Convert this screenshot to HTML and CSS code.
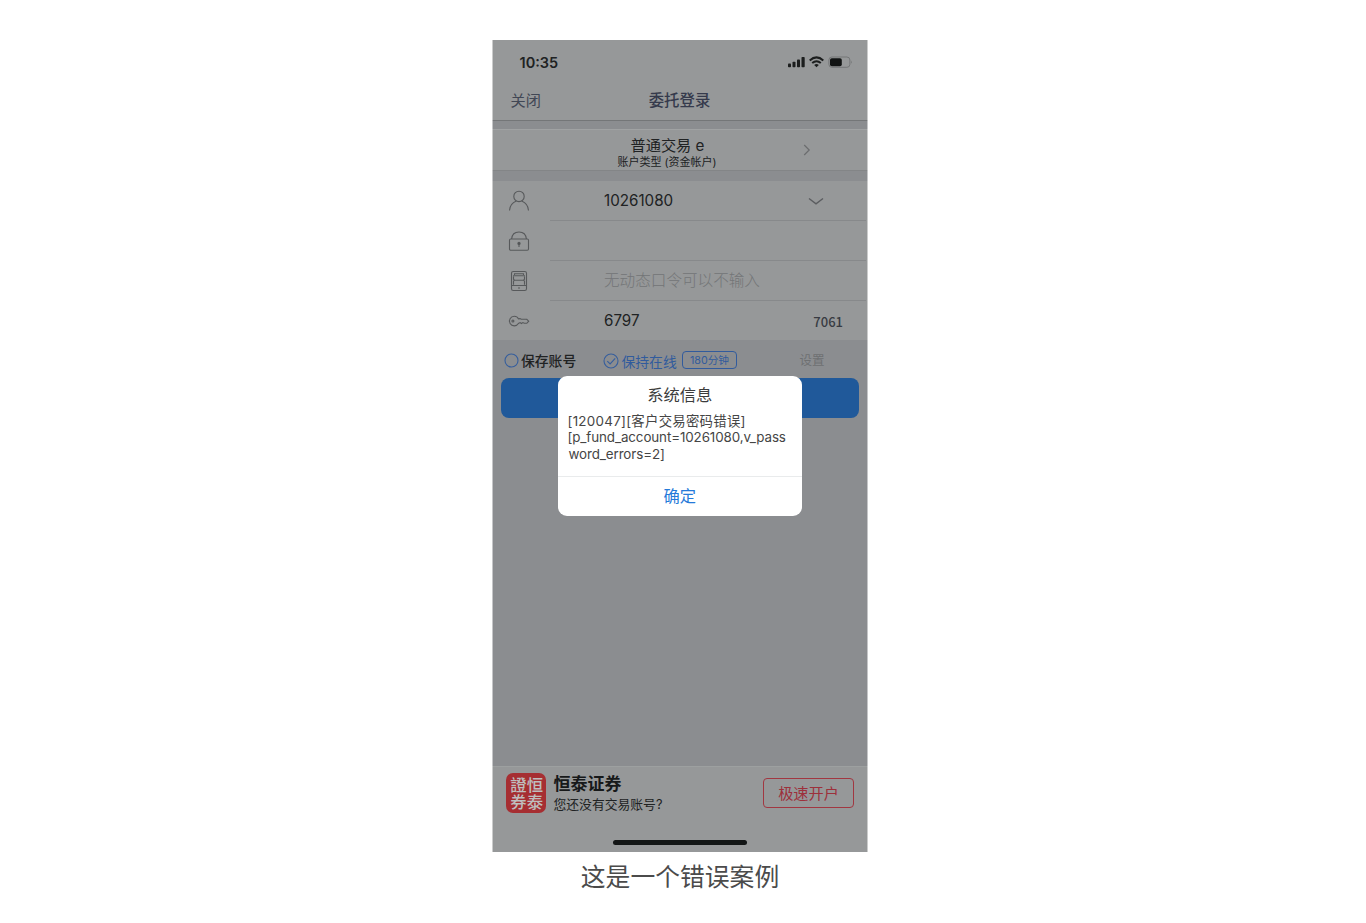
FILE: index.html
```html
<!DOCTYPE html>
<html lang="zh-CN">
<head>
<meta charset="utf-8">
<title>委托登录</title>
<link rel="stylesheet" href="styles.css">
</head>
<body>
<main class="page">
  <section class="phone">
    <header class="status">
      <span class="time">10:35</span>
      <svg class="status-icons" width="66" height="14" viewBox="0 0 66 14">
        <g fill="#1c1e1e">
          <rect x="1" y="8.6" width="3" height="3.6" rx=".8"/><rect x="5.5" y="6.8" width="3" height="5.4" rx=".8"/><rect x="10" y="4.6" width="3" height="7.6" rx=".8"/><rect x="14.5" y="2" width="3.2" height="10.2" rx=".8"/>
        </g>
        <g fill="none" stroke="#1c1e1e" stroke-width="2">
          <path d="M22.7 5.4Q29.5-.6 36.3 5.4"/><path d="M25.2 8.1Q29.5 4.4 33.8 8.1"/>
        </g>
        <path d="M27.2 9.9Q29.5 8.2 31.8 9.9L29.5 12.2Z" fill="#1c1e1e"/>
        <rect x="41.9" y="2" width="21" height="10.3" rx="3" fill="none" stroke="#747677"/>
        <rect x="43" y="3.2" width="11.8" height="8" rx="1.8" fill="#111313"/>
        <path d="M64 5.4Q65.8 7.1 64 8.8Z" fill="#747677"/>
      </svg>
    </header>
    <nav class="nav"><span class="close">关闭</span><h1 class="nav-title">委托登录</h1></nav>
    <div class="account">
      <div class="account-text"><div class="account-name">普通交易 e</div><div class="account-type">账户类型 (资金帐户)</div></div>
      <svg class="chevron" width="8" height="12" viewBox="0 0 8 12"><path d="M1.2 1L6.2 6L1.2 11"/></svg>
    </div>
    <form class="form">
      <div class="row">
        <svg class="icon" width="22" height="22" viewBox="0 0 22 22"><circle cx="11" cy="6.4" r="5.2"/><path d="M1.5 20.5C1.8 15.8 4.4 12.7 8.3 11.1M13.7 11.1C17.6 12.7 20.2 15.8 20.5 20.5"/></svg>
        <div class="field"><span class="value">10261080</span><svg class="down" width="16" height="9" viewBox="0 0 16 9"><path d="M1 1.5L8 6.8L15 1.5"/></svg></div>
      </div>
      <div class="row">
        <svg class="icon" width="22" height="22" viewBox="0 0 22 22"><rect x="1.5" y="9" width="19" height="11.3" rx="1.2"/><path d="M3.6 9C4 4.7 7 2 11 2S18 4.7 18.4 9M11 14V17"/><circle cx="11" cy="13.4" r="1.1" fill="#505254"/></svg>
        <div class="field"></div>
      </div>
      <div class="row">
        <svg class="icon" width="22" height="22" viewBox="0 0 22 22"><rect x="3.5" y="1.5" width="15" height="19" rx="1.8"/><path d="M6.5 5V3.7H15.5V5M5 5.8H17M5.5 6.5V9.2L6.5 10.2L5.5 11.2V14.8M16.5 6.5V9.2L15.5 10.2L16.5 11.2V14.8M6.5 10.2H15.5M4 15.5H18M10 18H12"/></svg>
        <div class="field"><span class="placeholder">无动态口令可以不输入</span></div>
      </div>
      <div class="row">
        <svg class="icon" width="22" height="22" viewBox="0 0 22 22"><path d="M10.6 8.9C9.7 7.2 8.3 6.3 6.2 6.3A4.8 4.8 0 1 0 10.4 13.5L12.1 12.6L13.4 13.5L14.9 12.6L16.2 13.3H18.8L20.7 11.2L18.8 9.3H13.2L12 8.6Z"/><circle cx="4.9" cy="11" r="1"/></svg>
        <div class="field last"><span class="value">6797</span><span class="captcha">7061</span></div>
      </div>
    </form>
    <div class="options">
      <svg class="radio" width="15" height="15" viewBox="0 0 15 15"><circle cx="7.5" cy="7.5" r="6.5"/></svg>
      <span class="save">保存账号</span>
      <svg class="radio checked" width="16" height="16" viewBox="0 0 16 16"><circle cx="8" cy="8" r="7"/><path d="M4.3 8.1L7.1 10.9L12.2 5.3"/></svg>
      <span class="online">保持在线</span>
      <span class="minutes">180分钟</span>
      <span class="settings">设置</span>
    </div>
    <div class="login"></div>
    <footer class="footer">
      <div class="promo">
        <div class="logo"><div class="seal">恒泰證券</div></div>
        <div class="promo-text"><strong class="brand">恒泰证券</strong><span class="hint">您还没有交易账号?</span></div>
        <div class="open">极速开户</div>
      </div>
      <div class="home"></div>
    </footer>
    <div class="modal">
      <h2 class="modal-title">系统信息</h2>
      <div class="message"><span class="m1">[120047][客户交易密码错误]</span><span class="m2">[p_fund_account=10261080,v_pass</span><span class="m3">word_errors=2]</span></div>
      <div class="confirm">确定</div>
    </div>
  </section>
  <p class="caption">这是一个错误案例</p>
</main>
</body>
</html>
```
FILE: styles.css
```css
* { box-sizing: border-box; }
body { margin: 0; background: #fff; font-family: Inter, "Noto Sans CJK SC", sans-serif; }
h1, h2, p { margin: 0; font-weight: 400; }
span, strong { white-space: nowrap; }
svg { flex: none; display: block; }
.page { height: 923px; padding: 40px 6px 0 0; display: flex; flex-direction: column; align-items: center; overflow: hidden; }
.phone { position: relative; flex: none; width: 376px; height: 812px; display: flex; flex-direction: column; background: #8b8d90; color: #202223; }
.phone::after { content: ""; position: absolute; inset: 0; border: solid rgba(255, 255, 255, .5); border-width: 0 1px; pointer-events: none; }
.status { height: 41px; padding: 4px 15px 0 27.5px; display: flex; align-items: center; justify-content: space-between; background: #969899; }
.status-icons { margin-top: -1px; }
.time { font-size: 14.5px; font-weight: 600; line-height: 20px; }
.nav { height: 40px; display: grid; grid-template-columns: 1fr auto 1fr; background: #969899; border-bottom: 1px solid #747678; color: #414755; line-height: 38px; }
.close { padding-left: 18.5px; font-size: 15.2px; line-height: 39px; }
.nav-title { font-size: 15.4px; font-weight: 500; color: #353a4c; line-height: 39px; margin-left: -1px; }
.account { height: 42px; margin: 8px 0 10px; padding-left: 125.5px; display: flex; align-items: center; background: #969899; border: solid #a0a2a3; border-width: 1px 0; border-bottom-color: #838587; }
.account-text { width: 110px; padding-top: 6px; white-space: nowrap; }
.account-name { font-size: 15.2px; line-height: 18px; margin-left: 13px; }
.account-type { font-size: 11px; line-height: 14px; }
.chevron { margin-left: 75px; fill: none; stroke: #6b6d6f; stroke-width: 1.2; }
.form { height: 159px; background: #969899; }
.row { height: 40px; display: flex; padding: 9px 2px 0 16px; }
.icon { fill: none; stroke: #57595b; stroke-width: 1.1; }
.field { height: 31px; flex: 1; margin-left: 20px; padding: 0 42px 9px 54px; display: flex; align-items: center; justify-content: space-between; border-bottom: 1px solid #87898b; }
.field.last { border: 0; padding-right: 23px; }
.value { font-size: 15.2px; color: #202223; line-height: 20px; }
.placeholder { font-size: 15.6px; color: #737577; font-weight: 300; line-height: 20px; }
.last .value { margin-top: -1px; }
.down { fill: none; stroke: #5b5d60; stroke-width: 1.4; margin-top: 2px; }
.captcha { font: 500 13px "Noto Sans CJK SC", sans-serif; line-height: 20px; color: #383b42; padding-top: 1px; }
.options { height: 38px; padding: 2px 0 0 12px; display: flex; align-items: center; }
.radio { fill: none; stroke: #365e9d; stroke-width: 1.1; }
.radio.checked { position: relative; top: 1px; }
.save { font-size: 13.8px; margin-left: 2px; width: 82px; font-weight: 500; }
.online { font-size: 13.8px; margin-left: 2.5px; width: 60.5px; color: #315b9d; padding-top: 1px; }
.minutes { width: 55px; height: 18px; border: 1px solid #315b9d; border-radius: 4px; font-size: 10.7px; line-height: 17px; color: #315b9d; text-align: center; }
.settings { margin-left: 62.5px; font-size: 12.5px; color: #6e7072; margin-top: -2px; }
.login { flex: none; height: 40px; margin: 0 9px; border-radius: 8px; background: #20599a; }
.footer { margin-top: auto; height: 86px; background: #969899; border-top: 1px solid #9da0a0; }
.promo { height: 52px; padding: 0 14px; display: flex; align-items: center; }
.logo { width: 40px; height: 40px; border-radius: 7px; background: #a62e32; color: #bebebe; display: flex; align-items: center; justify-content: center; }
.seal { writing-mode: vertical-rl; width: 34px; height: 33px; margin-right: 2px; font-size: 16.4px; font-weight: 500; line-height: 16.5px; word-break: break-all; }
.promo-text { margin-left: 7.5px; padding-top: 3px; display: flex; flex-direction: column; }
.brand { font-size: 17px; line-height: 20px; color: #17191a; }
.hint { font-size: 12.8px; line-height: 21px; }
.open { margin-left: auto; width: 91px; height: 30px; border: 1px solid #a13741; border-radius: 4px; font-size: 15.2px; line-height: 29px; text-align: center; color: #9d303b; }
.home { width: 134px; height: 5px; margin: 21px auto 0; border-radius: 3px; background: #131616; }
.modal { position: absolute; left: 65.5px; top: 336px; width: 244.5px; height: 140px; border-radius: 9px; background: #fff; color: #454545; display: flex; flex-direction: column; }
.modal-title { height: 37px; font-size: 16.3px; line-height: 38px; text-align: center; color: #3c3c3c; }
.message { height: 63px; padding-left: 10px; display: flex; flex-direction: column; font-size: 13.4px; line-height: 16.4px; }
.m1 { letter-spacing: .27px; }
.m2 { letter-spacing: -.11px; }
.m3 { padding-left: 1px; letter-spacing: -.11px; }
.confirm { height: 40px; border-top: 1px solid #e9ebec; color: #257ad9; font-size: 16.3px; line-height: 38px; text-align: center; }
.caption { font-size: 24.8px; line-height: 50px; color: #4b4b4b; }
```
